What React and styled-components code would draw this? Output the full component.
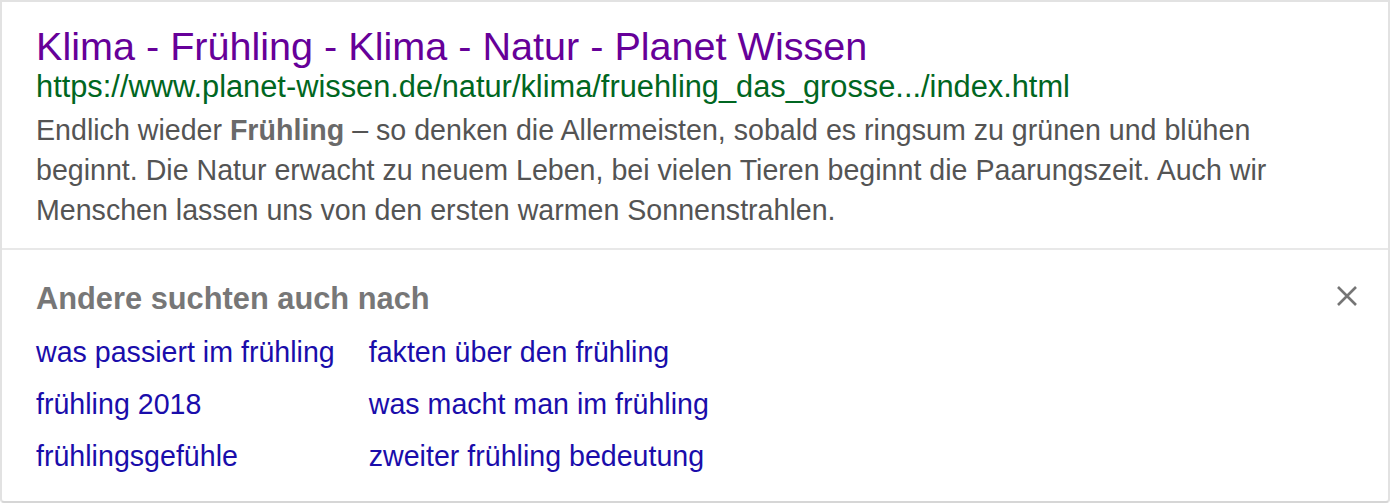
import React from 'react';
import styled, {createGlobalStyle} from 'styled-components';

const GlobalStyle = createGlobalStyle`
    html, body {
        margin: 0;
        padding: 0;
        background: #ffffff;
    }
    body {
        font-family: "Liberation Sans", Arial, sans-serif;
    }
`;

const Card = styled.div`
    box-sizing: border-box;
    width: 1390px;
    height: 503px;
    border: 2px solid #e2e2e2;
    border-bottom-color: #d6d6d6;
    border-radius: 0 0 4px 4px;
    background: #ffffff;
    display: flex;
    flex-direction: column;
`;

const Result = styled.div`
    padding: 20px 32px 18px 34px;
    border-bottom: 2px solid #e8e8e8;
`;

const Title = styled.a`
    display: block;
    font-size: 39.6px;
    line-height: 48px;
    color: #660099;
    text-decoration: none;
    white-space: nowrap;
`;

const Url = styled.div`
    font-size: 30.8px;
    line-height: 34px;
    color: #006621;
    white-space: nowrap;
`;

const Snippet = styled.p`
    margin: 6px 0 0 0;
    max-width: 1260px;
    font-size: 28.6px;
    line-height: 40px;
    color: #545454;

    & > b {
        color: #6a6a6a;
    }
`;

const Related = styled.div`
    padding: 31px 31px 0 34px;
`;

const Header = styled.div`
    display: flex;
    justify-content: space-between;
    align-items: flex-start;
`;

const Heading = styled.h3`
    margin: 0;
    font-size: 30.8px;
    line-height: 36px;
    font-weight: bold;
    color: #777777;
`;

const Close = styled.button`
    margin-top: 5px;
    padding: 0;
    border: none;
    background: none;
    width: 20px;
    height: 20px;
    display: flex;
    cursor: pointer;
`;

const Links = styled.div`
    margin-top: 9px;
    display: grid;
    grid-template-columns: auto auto;
    justify-content: start;
    column-gap: 34px;
`;

const Link = styled.a`
    font-size: 28.6px;
    line-height: 52px;
    color: #1a0dab;
    text-decoration: none;
    white-space: nowrap;
`;

const related = [
    'was passiert im frühling',
    'fakten über den frühling',
    'frühling 2018',
    'was macht man im frühling',
    'frühlingsgefühle',
    'zweiter frühling bedeutung',
];

function App() {
    return (
        <>
            <GlobalStyle />
            <Card>
                <Result>
                    <Title href="#">Klima - Frühling - Klima - Natur - Planet Wissen</Title>
                    <Url>https://www.planet-wissen.de/natur/klima/fruehling_das_grosse.../index.html</Url>
                    <Snippet>
                        Endlich wieder <b>Frühling</b> – so denken die Allermeisten, sobald es ringsum zu grünen und blühen
                        beginnt. Die Natur erwacht zu neuem Leben, bei vielen Tieren beginnt die Paarungszeit. Auch wir
                        Menschen lassen uns von den ersten warmen Sonnenstrahlen.
                    </Snippet>
                </Result>
                <Related>
                    <Header>
                        <Heading>Andere suchten auch nach</Heading>
                        <Close aria-label="Schließen">
                            <svg width="20" height="20" viewBox="0 0 20 20">
                                <path d="M1 1L19 19M19 1L1 19" stroke="#757575" strokeWidth="2.6" fill="none" />
                            </svg>
                        </Close>
                    </Header>
                    <Links>
                        {related.map((text) => (
                            <Link href="#" key={text}>{text}</Link>
                        ))}
                    </Links>
                </Related>
            </Card>
        </>
    )
}

export default App
